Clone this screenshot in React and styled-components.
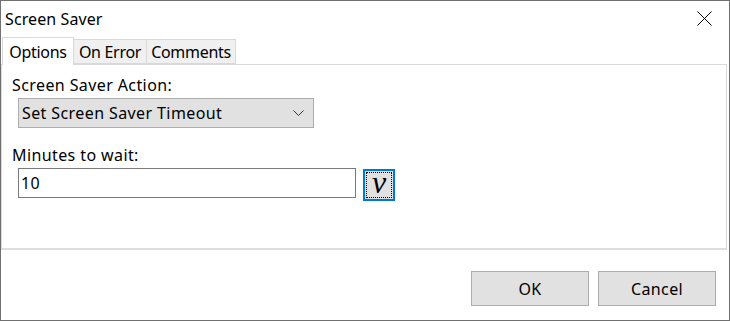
import styled, { createGlobalStyle } from "styled-components";

const GlobalStyle = createGlobalStyle`
  html, body {
    margin: 0;
    padding: 0;
    background: #ffffff;
  }
  body {
    font-family: "Noto Sans", "Open Sans", "DejaVu Sans", sans-serif;
    font-size: 16px;
    letter-spacing: 0.4px;
    color: #000;
  }
`;

const Window = styled.div`
  width: 730px;
  height: 321px;
  box-sizing: border-box;
  border: 1px solid #707070;
  background: #fff;
  display: flex;
  flex-direction: column;
`;

const TitleBar = styled.div`
  height: 35px;
  display: flex;
  align-items: center;
  justify-content: space-between;
  padding: 0 17px 0 4px;
  font-size: 16px;
  letter-spacing: 0.1px;
`;

const CloseIcon = () => (
  <svg width="15" height="15" viewBox="0 0 15 15">
    <path d="M0.5 0.5 L14.5 14.5 M14.5 0.5 L0.5 14.5" stroke="#000" strokeWidth="1" />
  </svg>
);

const TabStrip = styled.div`
  display: flex;
  align-items: flex-end;
  height: 28px;
  padding-left: 1px;
  position: relative;
  z-index: 1;
`;

const Tab = styled.div`
  box-sizing: border-box;
  width: ${(p) => p.$width}px;
  height: ${(p) => (p.$active ? "28px" : "25px")};
  margin-bottom: ${(p) => (p.$active ? "-1px" : "0")};
  display: flex;
  align-items: center;
  justify-content: center;
  background: ${(p) => (p.$active ? "#fff" : "#f0f0f0")};
  border: 1px solid #d9d9d9;
  border-bottom: ${(p) => (p.$active ? "none" : "1px solid #d9d9d9")};
  border-left: ${(p) => (p.$first ? "1px solid #d9d9d9" : "none")};
  font-size: 16px;
  letter-spacing: -0.3px;
  white-space: nowrap;
`;

const Panel = styled.div`
  height: 186px;
  box-sizing: border-box;
  margin: 0 2px 0 0;
  border: 1px solid #d9d9d9;
  border-bottom: 2px solid #dedede;
  padding: 10px 0 0 10px;
  display: flex;
  flex-direction: column;
`;

const Label = styled.div`
  font-size: 16px;
  line-height: 20px;
  margin-bottom: 3px;
`;

const Select = styled.div`
  box-sizing: border-box;
  width: 296px;
  height: 30px;
  margin-left: 6px;
  background: #e1e1e1;
  border: 1px solid #adadad;
  display: flex;
  align-items: center;
  justify-content: space-between;
  padding: 0 9px 0 3px;
  font-size: 16px;
  margin-bottom: 17px;
`;

const Chevron = () => (
  <svg width="11" height="7" viewBox="0 0 11 7">
    <path d="M0.5 0.5 L5.5 5.5 L10.5 0.5" stroke="#333" strokeWidth="1" fill="none" />
  </svg>
);

const InputRow = styled.div`
  display: flex;
  align-items: flex-start;
  gap: 7px;
  margin-left: 6px;
`;

const TextBox = styled.div`
  box-sizing: border-box;
  width: 338px;
  height: 30px;
  border: 1px solid #7a7a7a;
  display: flex;
  align-items: center;
  padding-left: 2px;
  font-size: 16px;
`;

const VarButton = styled.div`
  box-sizing: border-box;
  width: 32px;
  height: 32px;
  margin-top: 1px;
  border: 2px solid #0078d7;
  background: #e1e1e1;
  display: flex;
  align-items: center;
  justify-content: center;
  position: relative;
  font-family: "Liberation Serif", "DejaVu Serif", serif;
  font-style: italic;
  font-size: 32px;
  line-height: 1;
  letter-spacing: 0;
  padding-bottom: 6px;

  &::after {
    content: "";
    position: absolute;
    inset: 1px;
    border: 1px dotted #000;
  }
`;

const Footer = styled.div`
  flex: 1;
  display: flex;
  justify-content: flex-end;
  align-items: flex-start;
  gap: 9px;
  padding: 21px 13px 0 0;
`;

const Button = styled.div`
  box-sizing: border-box;
  width: 118px;
  height: 35px;
  background: #e1e1e1;
  border: 1px solid #adadad;
  display: flex;
  align-items: center;
  justify-content: center;
  font-size: 16px;
`;

export default function App() {
  return (
    <>
      <GlobalStyle />
      <Window>
        <TitleBar>
          <span>Screen Saver</span>
          <CloseIcon />
        </TitleBar>
        <TabStrip>
          <Tab $active $first $width={72}>Options</Tab>
          <Tab $width={73}>On Error</Tab>
          <Tab $width={89}>Comments</Tab>
        </TabStrip>
        <Panel>
          <Label>Screen Saver Action:</Label>
          <Select>
            <span>Set Screen Saver Timeout</span>
            <Chevron />
          </Select>
          <Label>Minutes to wait:</Label>
          <InputRow>
            <TextBox>10</TextBox>
            <VarButton>v</VarButton>
          </InputRow>
        </Panel>
        <Footer>
          <Button>OK</Button>
          <Button>Cancel</Button>
        </Footer>
      </Window>
    </>
  );
}
